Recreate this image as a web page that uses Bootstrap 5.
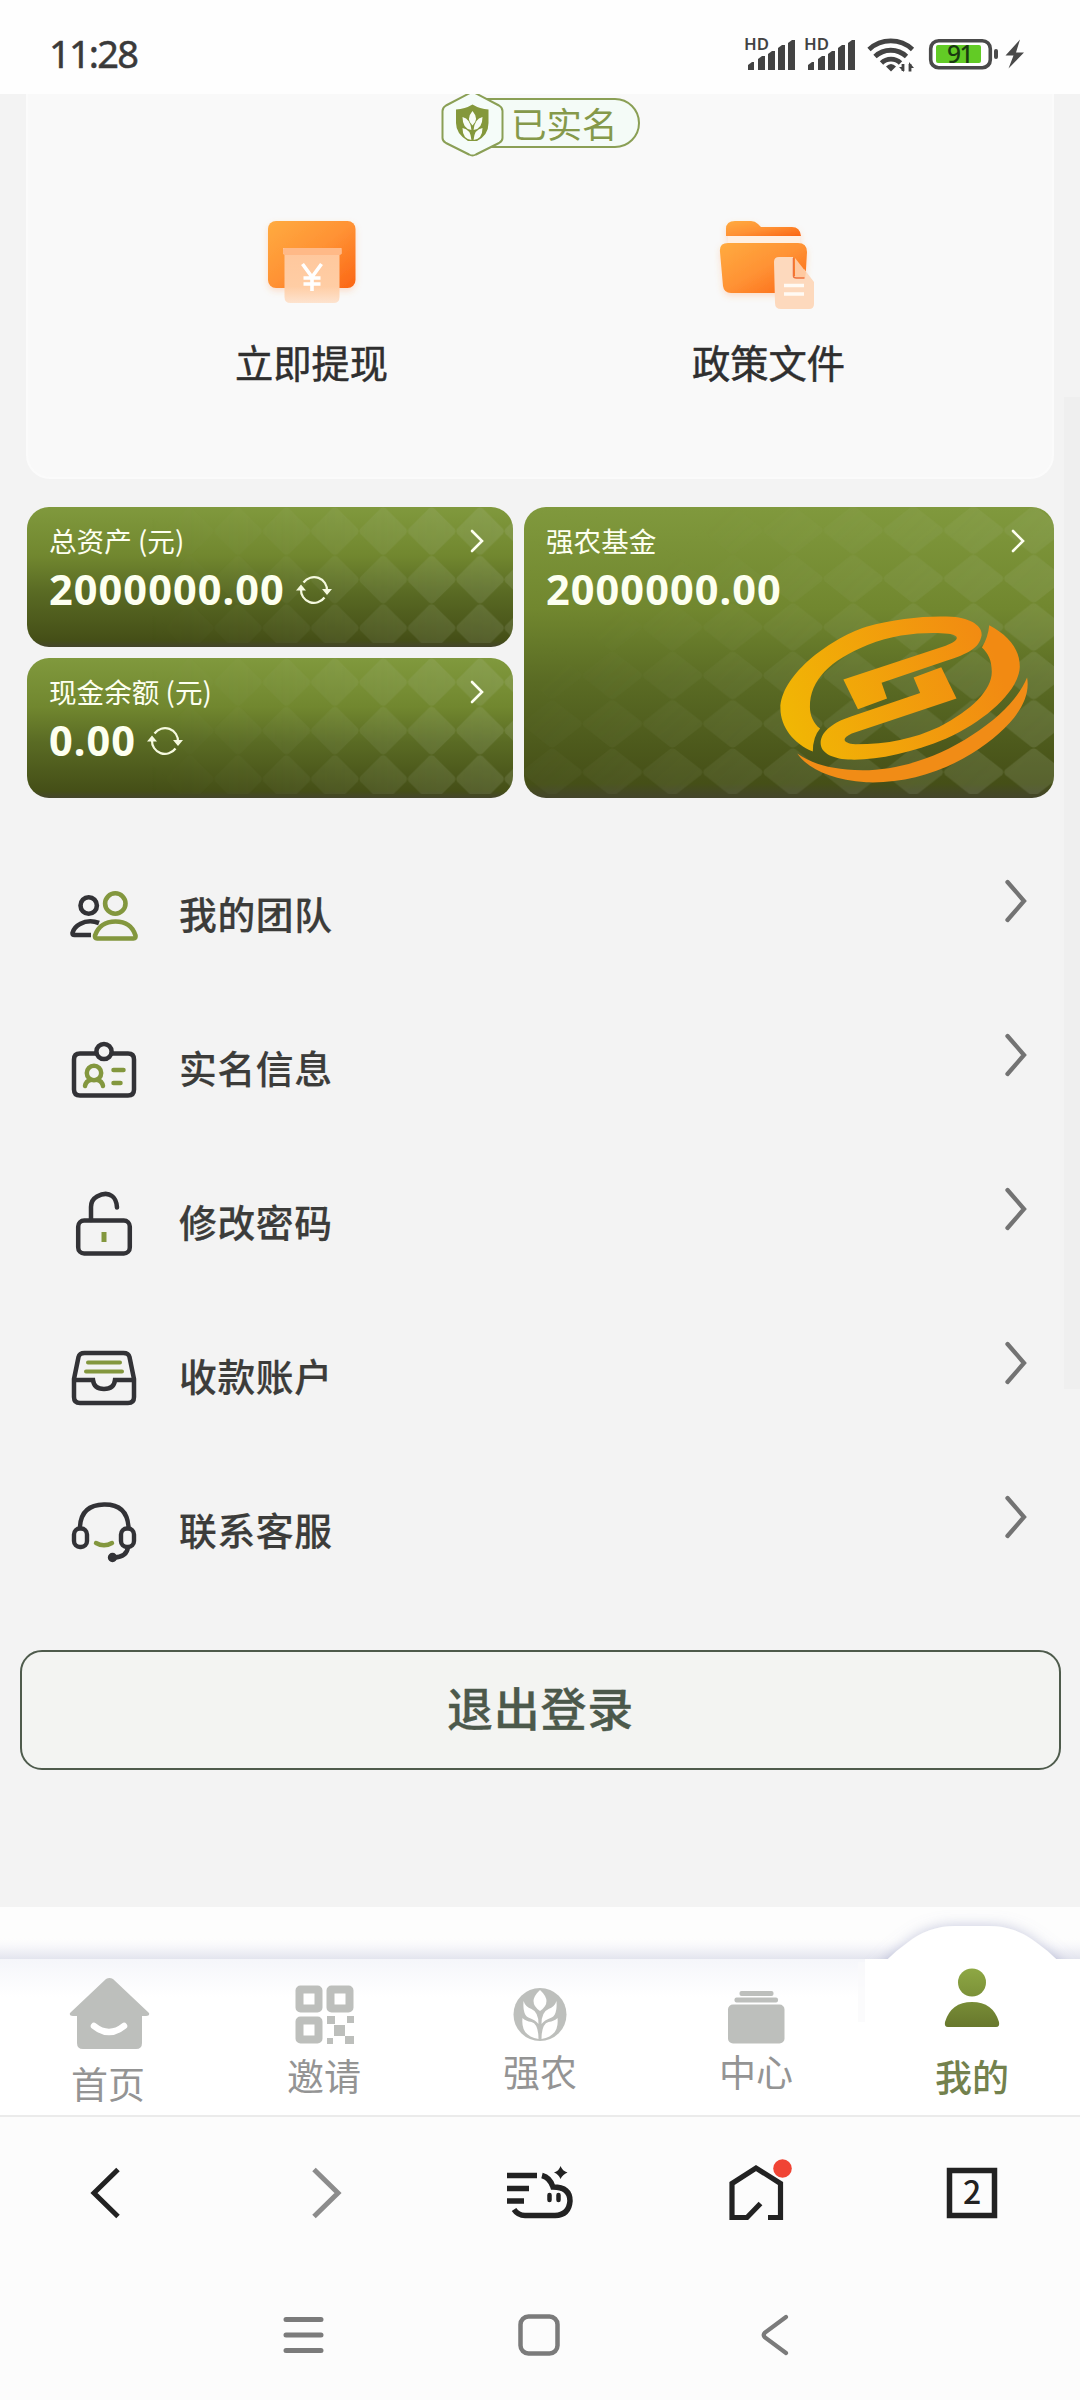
<!DOCTYPE html>
<html lang="zh-CN">
<head>
<meta charset="utf-8">
<meta name="viewport" content="width=device-width, initial-scale=1">
<title>我的</title>
<link href="https://cdn.jsdelivr.net/npm/bootstrap@5.3.0/dist/css/bootstrap.min.css" rel="stylesheet">
<style>
body{width:1080px;height:2400px;overflow:hidden;background:#fcfcfc;font-family:"Noto Sans","Noto Sans CJK SC",sans-serif;color:#2f2f2f;line-height:1}
svg{display:block;flex:none}
.cjk{font-family:"Noto Sans CJK SC",sans-serif}
.statusbar{height:94px;background:#fefefe;padding:0 0 0 49px}
.clock{font-size:38px;font-weight:400;color:#3a3a3a;width:690px;padding-top:34px;letter-spacing:-1.8px;-webkit-text-stroke:.5px #3a3a3a}
.page-area{height:1813px;background:#f3f3f3;position:relative}
.scroll-thumb{position:absolute;right:0;top:303px;width:16px;height:992px;background:#efefef}
.panel{height:385px;margin:0 26px 0 26px;background:#f9f9f9;border:2px solid #fbfbfb;border-top:0;border-radius:0 0 24px 24px;padding:0 55px 0 55px}
.verify{height:120px;padding-left:357px}
.verify-pill{height:50px;margin:4px 0 0 -32px;width:168px;border:2px solid #8a9f55;border-radius:0 25px 25px 0;background:#f4fbf7;color:#85994a;font-size:35.5px;padding:0 0 0 37px}
.quick span{font-size:38.3px;font-weight:400;-webkit-text-stroke:.5px #2f2f2f;margin-top:17px}
.assets{margin:28px 26px 0 27px;height:291px;gap:11px}
.asset{position:relative;border-radius:22px;overflow:hidden;color:#fdfff0;padding:20px 29px 0 22px;background:linear-gradient(#80993d 0,#71872f 35%,#5a6b24 60%,#454f17 95%,#44452c 100%)}
.asset>.bgart{position:absolute;inset:0;width:100%;height:100%}
.asset>div{position:relative}
.asset .cap{font-size:27.6px;height:28px}
.asset .amount{font-size:41.5px;font-weight:700;height:42px;margin-top:14px;letter-spacing:1.05px;gap:11px}
.menu{margin-top:40px}
.menu-row{height:154px;padding:0 52px 0 64px}
.menu-row span{font-size:37.8px;letter-spacing:.6px;font-weight:500;color:#3c3c3a;margin:0 0 4px 35px;-webkit-text-stroke:.2px #3c3c3a}
.menu-row .go{margin-bottom:28px}
.logout{margin:42px 19px 0 20px;height:120px;width:1041px;border:2px solid #4e5b4c;border-radius:22px;font-size:46px;letter-spacing:.8px;font-weight:500;color:#4c594b;background:#f3f4f2;-webkit-text-stroke:.3px #4c594b}
.tabs-wrap{height:210px;background:#fdfdfd;position:relative;border-bottom:2px solid #ebebeb;padding-top:52px;overflow:hidden}
.tabs-wrap>.bump{position:absolute;left:0;top:0}
.tabs-inner{position:relative}
.tab{width:216px;height:156px;font-size:37px;color:#949494}
.tab span{margin-top:-2px}
.tab.on{color:#73814d;font-weight:500}
.toolbar{height:152px}
.toolbar>div{width:216px}
.sysnav{height:131px;padding:0 186px 0 185px}
.sysnav>div{width:236px}
</style>
<script src="https://cdn.jsdelivr.net/npm/bootstrap@5.3.0/dist/js/bootstrap.bundle.min.js"></script>
</head>
<body>
<svg width="0" height="0" class="position-absolute">
<defs>
<linearGradient id="fadeG" x1="0" x2="1"><stop offset=".25" stop-color="#fff" stop-opacity="0"/><stop offset=".5" stop-color="#fff" stop-opacity=".3"/><stop offset=".8" stop-color="#fff" stop-opacity=".75"/><stop offset="1" stop-color="#fff"/></linearGradient>
<linearGradient id="fadeH" x1="0" x2="1" y1=".2" y2=".8"><stop offset=".2" stop-color="#fff" stop-opacity=".03"/><stop offset=".6" stop-color="#fff" stop-opacity=".6"/><stop offset="1" stop-color="#fff"/></linearGradient>
<pattern id="dia" width="48.4" height="48.4" x="332" y="0" patternUnits="userSpaceOnUse"><path d="M21.500 1.500q2.700-2 5.400 0L47 21.500q2 2.700 0 5.400L26.900 47q-2.700 2-5.400 0L1.500 26.900q-2-2.700 0-5.400z" fill="#b9c4a4" fill-opacity=".17"/></pattern>
<pattern id="diaW" width="60.2" height="48.4" x="419.5" y="-1" patternUnits="userSpaceOnUse"><path d="M27 1.500q3-2 6 0L58.500 21.500q2.400 2.700 0 5.400L33 47q-3 2-6 0L1.700 26.900q-2.400-2.700 0-5.400z" fill="#b9c4a4" fill-opacity=".17"/></pattern>
<mask id="mS" maskUnits="userSpaceOnUse" x="0" y="0" width="486" height="140"><rect width="486" height="140" fill="url(#fadeG)"/></mask>
<mask id="mW" maskUnits="userSpaceOnUse" x="0" y="0" width="530" height="291"><rect width="530" height="291" fill="url(#fadeH)"/></mask>
<linearGradient id="or" x1="0" y1="0" x2="1" y2="1"><stop offset="0" stop-color="#ffab40"/><stop offset=".5" stop-color="#ff9234"/><stop offset="1" stop-color="#fb6514"/></linearGradient>
<linearGradient id="coin" gradientUnits="userSpaceOnUse" x1="750" x2="1400" y1="700" y2="480"><stop offset="0" stop-color="#f1b704"/><stop offset=".9" stop-color="#f28a12"/></linearGradient>
<linearGradient id="me" gradientUnits="userSpaceOnUse" x1="0" x2="0" y1="0" y2="60"><stop offset="0" stop-color="#8ea844"/><stop offset="1" stop-color="#67772c"/></linearGradient>
<linearGradient id="rcpt" x1="0" x2="0" y1="0" y2="1"><stop offset="0" stop-color="#ffc79c"/><stop offset=".7" stop-color="#ffcda4"/><stop offset="1" stop-color="#fde3cf"/></linearGradient>
<filter id="glow" x="-20%" y="-20%" width="140%" height="150%"><feDropShadow dx="0" dy="3" stdDeviation="3" flood-color="#ff8a3c" flood-opacity=".25"/></filter>
<filter id="bs" x="-20%" y="-50%" width="140%" height="220%"><feDropShadow dx="0" dy="0" stdDeviation="7" flood-color="#8d93bd" flood-opacity=".5"/></filter>
<symbol id="sig" viewBox="0 0 52 36" width="52" height="36"><g fill="#434343"><path d="M3 34v-5l4-3h2v8z"/><path d="M13 34V23l4-3h3v14z"/><path d="M23 34V18l4-3h3v19z"/><path d="M33 34V12l4-3h3v25z"/><path d="M43 34V7l4-3h3v30z"/></g></symbol>
<symbol id="refresh" viewBox="0 0 36 30"><g fill="none" stroke="#f5f9df" stroke-width="2.2"><path d="M7.500 7.500A13 13 0 0 1 31 16M5 14A13 13 0 0 0 28.500 22.500"/></g><path d="M26 14h10l-5 6zM0 15.500h10l-5-6z" fill="#f5f9df"/></symbol>
<symbol id="chevW" viewBox="0 0 14 24"><path d="M2 2L12 12 2 22" fill="none" stroke="#fdfff0" stroke-width="2.6" stroke-linecap="round"/></symbol>
<symbol id="chevG" viewBox="0 0 24 44"><path d="M3.500 3L20 22 3.500 41" fill="none" stroke="#737373" stroke-width="4.300" stroke-linecap="round"/></symbol>
</defs>
</svg>

<header class="statusbar d-flex">
  <div class="clock lh-base"><div class="lh-1">11:28</div></div>
  <svg width="300" height="94" viewBox="739 0 300 94">
    <text x="744" y="50" font-size="16.500" font-weight="600" fill="#434343" font-family="Noto Sans" textLength="25" lengthAdjust="spacingAndGlyphs">HD</text>
    <use href="#sig" x="745" y="36" width="52" height="36"/>
    <text x="804" y="50" font-size="16.500" font-weight="600" fill="#434343" font-family="Noto Sans" textLength="25" lengthAdjust="spacingAndGlyphs">HD</text>
    <use href="#sig" x="805" y="36" width="52" height="36"/>
    <g fill="none" stroke="#434343" stroke-width="4.800"><path d="M869 49.500A32 32 0 0 1 912.500 49.500"/><path d="M875 56.500A23 23 0 0 1 906.500 56.500"/><path d="M881.500 63A13.500 13.500 0 0 1 900.500 63"/></g>
    <path d="M886 66.500q5-5 10 0l-5 5z" fill="#434343"/>
    <path d="M903 71v-7M910 64v7.500" stroke="#434343" stroke-width="2.800"/><path d="M899 67h5v5zM909 62v6h5z" fill="#434343"/>
    <rect x="930.700" y="40.700" width="59.600" height="27" rx="8" fill="#fff" stroke="#4a4a4a" stroke-width="3.600"/>
    <rect x="936" y="45" width="45" height="18" rx="2" fill="#62cb25"/>
    <text x="959.500" y="63" font-size="24.500" text-anchor="middle" fill="#193b10" font-family="Noto Sans" letter-spacing="-1.500" font-weight="500">91</text>
    <rect x="994" y="49" width="4" height="10" rx="2" fill="#4a4a4a"/>
    <path d="M1020 39.500L1005.500 55.500h8L1008.500 68.500 1024 52.500h-8z" fill="#4a4a4a"/>
  </svg>
</header>

<main class="page-area">
  <div class="scroll-thumb"></div>
  <section class="panel">
    <div class="verify d-flex align-items-start">
      <svg class="position-relative z-1" width="64" height="64" viewBox="440 94 64 64">
        <path d="M469 93.500Q472.500 91 476 93.500L499 105.500Q502.500 107.500 502.500 111V138Q502.500 141 499 143L476 154.500Q472.500 156.500 469 154.500L446 143Q442.500 141 442.500 138V111Q442.500 107.500 446 105.500Z" fill="#f5fcf9" stroke="#8a9f55" stroke-width="2"/>
        <path d="M472.500 104.500Q480 109 488.500 109.500V123Q488.500 135 477 141H468Q456 134 456 123V109.500Q465 109 472.500 104.500Z" fill="#84983b"/>
        <g fill="#f8fdf6"><path d="M472.500 111q7 8 0 14.500q-7-6.500 0-14.500z"/><path d="M462.500 117q8 2 9 13q-9-1-9-13zM482.500 117q-8 2-9 13q9-1 9-13z"/><path d="M462.500 128q8 1 9 12q-9-1-9-12zM482.500 128q-8 1-9 12q9-1 9-12z"/></g>
        <path d="M472.500 128v13" stroke="#84983b" stroke-width="1.500"/>
      </svg>
      <div class="verify-pill cjk d-flex align-items-center">已实名</div>
    </div>
    <div class="quick d-flex cjk">
      <div class="col-6 d-flex flex-column align-items-center">
        <svg width="110" height="112" viewBox="257 214 110 112">
          <rect x="268" y="221" width="87.500" height="67" rx="8" fill="url(#or)" filter="url(#glow)"/>
          <path d="M283 248h58.500v6h-2v43q0 6-6 6h-43q-6 0-6-6v-43h-1.500z" fill="url(#rcpt)"/>
          <rect x="283" y="248" width="58.500" height="7" rx="2" fill="#ffb987"/>
          <path d="M302.500 264l9.500 13 9.500-13M312 277v14M303.500 278h17M303.500 284h17" stroke="#fff" stroke-width="3.600" fill="none"/>
        </svg>
        <span>立即提现</span>
      </div>
      <div class="col-6 d-flex flex-column align-items-center">
        <svg width="110" height="112" viewBox="714 214 110 112">
          <g filter="url(#glow)"><path d="M726 236v-7q0-8 9-8h16q4 0 7 3l3 3h31q8 0 9 9z" fill="url(#or)"/><rect x="728" y="236" width="72" height="8" fill="#fff0e3"/>
          <path d="M728 243h70q9 0 9 9l-2 34q-1 7-8 7h-66q-7 0-8-7l-3-34q-1-9 8-9z" fill="url(#or)"/></g>
          <path d="M779 257h14l1 19h10v-7l10 13v22q0 5-5 5h-28q-6 0-6-6l-1-41q0-5 5-5z" fill="#fdd9bd"/>
          <path d="M795 258v17q0 3 3 3h7l1-6z" fill="#ffc9a0"/><path d="M793.500 258v18q0 2 3 2h8" fill="none" stroke="#ee713b" stroke-width="1.500"/>
          <path d="M784 285.500h20M784 294h20" stroke="#fffaf4" stroke-width="3.400"/>
        </svg>
        <span>政策文件</span>
      </div>
    </div>
  </section>

  <section class="assets d-flex">
    <div class="d-flex flex-column justify-content-between" style="width:486px">
      <div class="asset" style="height:140px">
        <svg class="bgart" viewBox="0 0 486 140"><rect width="486" height="136" fill="url(#dia)" mask="url(#mS)"/></svg>
        <div class="cap cjk d-flex justify-content-between align-items-center"><span>总资产 (元)</span><svg width="14" height="24"><use href="#chevW"/></svg></div>
        <div class="amount d-flex align-items-center"><span>2000000.00</span><svg width="36" height="30"><use href="#refresh"/></svg></div>
      </div>
      <div class="asset" style="height:140px">
        <svg class="bgart" viewBox="0 0 486 140"><rect width="486" height="136" fill="url(#dia)" mask="url(#mS)"/></svg>
        <div class="cap cjk d-flex justify-content-between align-items-center"><span>现金余额 (元)</span><svg width="14" height="24"><use href="#chevW"/></svg></div>
        <div class="amount d-flex align-items-center"><span>0.00</span><svg width="36" height="30"><use href="#refresh"/></svg></div>
      </div>
    </div>
    <div class="asset flex-fill">
      <svg class="bgart" viewBox="0 0 530 291"><rect width="530" height="287" fill="url(#diaW)" mask="url(#mW)"/></svg>
      <svg class="bgart" viewBox="39 51 1457 872" preserveAspectRatio="none"><g fill="url(#coin)">
        <path d="M833 784C780 760 744 710 744 655C744 560 870 450 980 410C1060 385 1150 376 1215 380C1270 384 1300 410 1297 436C1290 475 1260 490 1200 512L1022 578L1037 625L957 657L917 568L1190 470C1238 452 1240 436 1205 431C1150 425 1060 430 985 464C880 510 825 570 825 650C825 675 835 700 853 715Q833 740 833 784Z"/>
        <path d="M1318 405C1370 435 1402 475 1402 530C1400 600 1310 690 1200 745C1100 790 1000 812 930 808C880 803 850 785 855 750C862 715 900 692 940 678L1128 608L1110 562L1186 531L1228 625L940 730C910 745 915 758 950 762C1040 762 1110 745 1180 710C1270 660 1325 600 1325 545C1325 510 1315 490 1298 472Q1315 440 1318 405Z"/>
        <path fill="#f18c16" d="M1422 562C1435 640 1370 720 1270 790C1180 850 1080 880 980 876C880 868 820 835 790 790C830 820 880 838 970 840C1070 840 1180 800 1270 735C1350 680 1400 620 1422 562Z"/>
      </g></svg>
      <div class="cap cjk d-flex justify-content-between align-items-center"><span>强农基金</span><svg width="14" height="24"><use href="#chevW"/></svg></div>
      <div class="amount d-flex align-items-center"><span>2000000.00</span></div>
    </div>
  </section>

  <nav class="menu cjk">
    <div class="menu-row d-flex align-items-center">
      <svg width="80" height="80" viewBox="64 875 80 80" fill="none" stroke="#323236" stroke-width="4.600"><circle cx="88.700" cy="905.500" r="8.200"/><path d="M99 923q-10-4-19 1-6 3-7.500 9 0 2 2 2H91"/><g stroke="#83973e"><circle cx="115.300" cy="903.500" r="10.200"/><path d="M97 938.500q-2.500 0-2-3 5-14 20.500-14T135.500 935.500q.5 3-2 3z"/></g></svg>
      <span>我的团队</span><svg class="go ms-auto" width="24" height="44"><use href="#chevG"/></svg>
    </div>
    <div class="menu-row d-flex align-items-center">
      <svg width="80" height="80" viewBox="64 1029 80 80" fill="none" stroke="#323236" stroke-width="4.500"><path d="M97 1053.500H80q-6 0-6 6v30q0 6 6 6h48q6 0 6-6v-30q0-6-6-6H111"/><circle cx="104" cy="1051.500" r="7.600"/><g stroke="#83973e" stroke-linecap="round"><circle cx="94" cy="1073" r="7.200"/><path d="M85 1086q1-5 5.500-6M103 1086q-1-5-5.500-6M113.500 1070h10M113.500 1083h7"/></g></svg>
      <span>实名信息</span><svg class="go ms-auto" width="24" height="44"><use href="#chevG"/></svg>
    </div>
    <div class="menu-row d-flex align-items-center">
      <svg width="80" height="80" viewBox="64 1183 80 80" fill="none" stroke="#323236" stroke-width="4.500"><rect x="78.200" y="1220.500" width="51.600" height="33" rx="6"/><path d="M91 1220v-13a12 12 0 0 1 6-10.500q9-5 15-.5 4.500 3 5 11.500" stroke-linecap="round"/><path d="M104 1232v10" stroke="#83973e" stroke-width="5"/></svg>
      <span>修改密码</span><svg class="go ms-auto" width="24" height="44"><use href="#chevG"/></svg>
    </div>
    <div class="menu-row d-flex align-items-center">
      <svg width="80" height="80" viewBox="64 1337 80 80" fill="none" stroke="#323236" stroke-width="4.500"><path d="M84.500 1353h39q5 0 6 4l4.500 22v18q0 6-6 6H80q-6 0-6-6v-18l4.500-22q1-4 6-4z"/><path d="M74 1380h19q1 9 11 9t11-9h19"/><path d="M88 1362.500h32M86 1371.500h36" stroke="#83973e" stroke-width="4" stroke-linecap="round"/></svg>
      <span>收款账户</span><svg class="go ms-auto" width="24" height="44"><use href="#chevG"/></svg>
    </div>
    <div class="menu-row d-flex align-items-center">
      <svg width="80" height="80" viewBox="64 1491 80 80" fill="none" stroke="#323236" stroke-width="4.400"><path d="M80 1528v-1q1-22 24-22.500t24.500 22.500v1"/><rect x="74" y="1528.500" width="13" height="18.500" rx="6"/><rect x="121" y="1528.500" width="13" height="18.500" rx="6"/><path d="M128 1547q-1 10-14 10.500"/><circle cx="112.500" cy="1557.500" r="2.500" fill="#323236"/><path d="M96 1543q8 4.500 16 0" stroke="#83973e" stroke-linecap="round"/></svg>
      <span>联系客服</span><svg class="go ms-auto" width="24" height="44"><use href="#chevG"/></svg>
    </div>
  </nav>
  <button class="logout cjk d-flex align-items-center justify-content-center pt-0 pb-1 px-0"><span class="mb-1">退出登录</span></button>
</main>

<footer>
  <div class="tabs-wrap">
    <svg class="bump" width="1080" height="208" viewBox="0 1907 1080 208">
      <defs><linearGradient id="up" x1="0" x2="0" y1="0" y2="1"><stop offset="0" stop-color="#fdfdfd" stop-opacity="0"/><stop offset=".5" stop-color="#f5f5f9"/><stop offset="1" stop-color="#e3e5ee"/></linearGradient><linearGradient id="dn" x1="0" x2="0" y1="0" y2="1"><stop offset="0" stop-color="#f5f6fa"/><stop offset="1" stop-color="#fff"/></linearGradient><clipPath id="cp"><rect y="1907" width="1080" height="52"/></clipPath></defs>
      <rect y="1937" width="1080" height="22" fill="url(#up)"/>
      <g clip-path="url(#cp)"><path d="M866 1985Q884 1959 907 1943Q928 1926 955 1926H989Q1016 1926 1037 1943Q1060 1959 1078 1985Z" fill="#fff" filter="url(#bs)"/></g>
      <rect y="1959" width="1080" height="160" fill="#fff"/><rect y="1959" width="865" height="38" fill="url(#dn)"/>
      <rect x="858" y="1962" width="7" height="60" fill="#fafafb" opacity=".7"/>
    </svg>
    <div class="tabs-inner d-flex cjk">
      <div class="tab d-flex flex-column align-items-center"><svg width="84" height="108" viewBox="66 1959 84 108"><path d="M106 1979q3.500-2 7 0l36 34q1 3-3 3h-4v27q0 6-6 6H83q-6 0-6-6v-27h-4q-4 0-3-3z" fill="#bdbfbc"/><path d="M94 2026q15 12 30 0" stroke="#fff" stroke-width="6.500" fill="none" stroke-linecap="round"/></svg><span>首页</span></div>
      <div class="tab d-flex flex-column align-items-center"><svg width="60" height="100" viewBox="294 1962 60 100" fill="none" stroke="#bdbfbc" stroke-width="8"><rect x="299.500" y="1992.500" width="19" height="19" rx="1"/><rect x="330.500" y="1992.500" width="19" height="19" rx="1"/><rect x="299.500" y="2023.500" width="19" height="19" rx="1"/><path d="M327 2019h8v8h-8zM347 2019h7v7h-7zM334 2028h11v11h-11zM327 2041h6v6h-6zM345 2039h9v8h-9z" fill="#bdbfbc" stroke="none"/></svg><span>邀请</span></div>
      <div class="tab d-flex flex-column align-items-center"><svg width="60" height="96" viewBox="510.500 1959 60 96"><circle cx="540.500" cy="2014.500" r="26.500" fill="#bdbfbc"/><g fill="#fff"><path d="M540.500 1990q13 12 0 21q-13-9 0-21z"/><path d="M524 2001q2 6 8 8 7 3 7 15-3-4-9-6-7-2-6-17zM557 2001q-2 6-8 8-7 3-7 15 3-4 9-6 7-2 6-17z"/><path d="M523 2018q3 3 9 4 7 2 7 17-18-3-16-21zM558 2018q-3 3-9 4-7 2-7 17 18-3 16-21z"/></g></svg><span>强农</span></div>
      <div class="tab d-flex flex-column align-items-center"><svg width="60" height="96" viewBox="726.500 1959 60 96" fill="#bdbfbc"><rect x="740" y="1991" width="34" height="5" rx="2"/><rect x="735" y="1997.500" width="43.500" height="5" rx="2"/><rect x="728.500" y="2004.500" width="56.500" height="39" rx="5"/></svg><span>中心</span></div>
      <div class="tab on d-flex flex-column align-items-center"><svg width="60" height="101" viewBox="-30 -9 60 101" fill="url(#me)"><circle cx="0" cy="14.500" r="14"/><path d="M-24 59q-4 0-3-5 6-20 27-20t27 20q1 5-3 5z"/></svg><span>我的</span></div>
    </div>
  </div>

  <div class="toolbar d-flex align-items-center">
    <div class="d-flex justify-content-center"><svg width="60" height="60" viewBox="78 2163 60 60"><path d="M118 2169.500L94 2193l24 23.500" fill="none" stroke="#222" stroke-width="5"/></svg></div>
    <div class="d-flex justify-content-center"><svg width="60" height="60" viewBox="294 2163 60 60"><path d="M314 2169.500L338 2193l-24 23.500" fill="none" stroke="#8c8c8c" stroke-width="5"/></svg></div>
    <div class="d-flex justify-content-center"><svg width="70" height="60" viewBox="505 2163 70 60" fill="none" stroke="#222" stroke-width="5.500"><path d="M507 2175.500h30M507 2188.500h22M507 2201h17M542 2175.500q8 2 11 11.500 17 0 17 14-1 14-15 14.500H525q-7 0-11-6"/><path d="M549.500 2195v5M558.500 2195v5" stroke-linecap="round" stroke-width="4.500"/><path d="M560.500 2166q2 5 7 6.500-5 2-7 6.500-2-5-6.500-6.500 5-1.500 6.500-6.500z" fill="#222" stroke="none"/></svg></div>
    <div class="d-flex justify-content-center"><svg width="76" height="72" viewBox="718 2157 76 72"><path d="M768 2217.500h12.500v-34L756 2168l-24 15.500V2217.500h15l13.500-14" fill="none" stroke="#222" stroke-width="5.200"/><circle cx="782.500" cy="2168.500" r="9.300" fill="#f04434"/></svg></div>
    <div class="d-flex justify-content-center"><svg width="60" height="60" viewBox="942 2163 60 60"><rect x="949.500" y="2170.500" width="45" height="45" fill="none" stroke="#222" stroke-width="5.500"/><text x="972" y="2204" font-size="32" text-anchor="middle" font-family="Noto Sans CJK SC" font-weight="500" fill="#222">2</text></svg></div>
  </div>
  <div class="sysnav d-flex align-items-center">
    <div class="d-flex justify-content-center"><svg width="44" height="44" viewBox="281 2313 44 44"><path d="M286 2319.500h35M286 2335h35M286 2350.500h35" stroke="#7b7b7b" stroke-width="5" stroke-linecap="round"/></svg></div>
    <div class="d-flex justify-content-center"><svg width="44" height="44" viewBox="517 2313 44 44"><rect x="520.500" y="2316.500" width="37" height="37" rx="8" fill="none" stroke="#7b7b7b" stroke-width="4.500"/></svg></div>
    <div class="d-flex justify-content-center"><svg width="44" height="44" viewBox="753 2313 44 44"><path d="M786 2317L765 2332.500q-2.500 2.500 0 5L786 2353" fill="none" stroke="#7b7b7b" stroke-width="4.200" stroke-linecap="round"/></svg></div>
  </div>
</footer>
</body>
</html>
